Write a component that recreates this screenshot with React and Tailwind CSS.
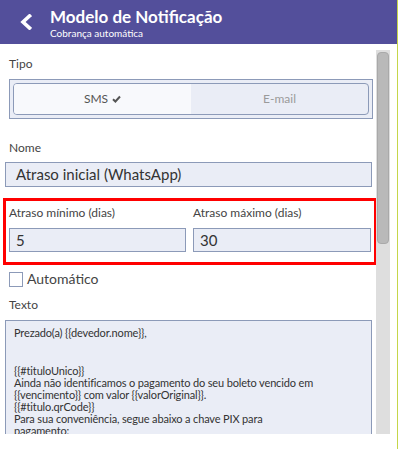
import React from "react";

const font = { fontFamily: "Lato, 'Open Sans', sans-serif" };

export default function App() {
  return (
    <div className="flex h-[449px] w-[398px] overflow-hidden bg-white" style={font}>
      <div className="flex h-[449px] w-[397px] flex-col">
        <header className="flex h-[44px] shrink-0 items-center bg-[#534f9b] text-white">
          <div className="flex w-[50px] justify-center pl-[1px]">
            <svg width="12" height="16" viewBox="0 0 12 16" fill="none">
              <polyline points="9.5,2 3,8 9.5,14" stroke="white" strokeWidth="3.6" strokeLinecap="square" />
            </svg>
          </div>
          <div className="flex flex-col">
            <span className="text-[17px] font-bold leading-[21px]">Modelo de Notificação</span>
            <span className="text-[10px] leading-[12px]">Cobrança automática</span>
          </div>
        </header>

        <div className="flex h-[390px] max-h-[390px] shrink-0 overflow-hidden">
          <div className="h-[390px] w-[376px] shrink-0 overflow-hidden text-[#333]">
            <div className="ml-[9px] mt-[13px] text-[12px] leading-[14px] text-[#444]">Tipo</div>
            <div className="ml-[9px] mt-[8px] h-[40px] w-[364px] border border-[#8c9ab8] bg-[#eaedf6] p-[3px]">
              <div className="flex h-full overflow-hidden rounded-[4px] border border-[#8c9ab8]">
                <div className="flex flex-1 items-center justify-center gap-[4px] bg-[#f8f9fc] text-[12px] text-[#555]">
                  SMS
                  <svg width="9" height="8" viewBox="0 0 9 8">
                    <polyline points="1,4.2 3.4,6.5 8,1.5" fill="none" stroke="#555" strokeWidth="2" />
                  </svg>
                </div>
                <div className="flex flex-1 items-center justify-center text-[12px] text-[#9a9a9a]">E-mail</div>
              </div>
            </div>

            <div className="ml-[9px] mt-[22px] text-[12px] leading-[14px] text-[#444]">Nome</div>
            <div className="ml-[5px] mt-[7px] flex h-[25px] w-[367px] items-center border border-[#8c9ab8] bg-[#eaedf6] px-[10px] text-[15px] text-[#333]">
              Atraso inicial (WhatsApp)
            </div>

            <div className="ml-[3px] mt-[11px] h-[67px] w-[374px] border-[3px] border-[#f00] px-[3px] pt-[5px]">
              <div className="flex gap-[7px]">
                <div className="flex w-[178px] flex-col">
                  <span className="text-[12px] leading-[14px] text-[#444]">Atraso mínimo (dias)</span>
                  <div className="mt-[8px] flex h-[24px] items-center border border-[#8c9ab8] bg-[#eaedf6] px-[6px] text-[15px]">5</div>
                </div>
                <div className="flex w-[179px] flex-col">
                  <span className="text-[12px] leading-[14px] text-[#444]">Atraso máximo (dias)</span>
                  <div className="mt-[8px] flex h-[24px] items-center border border-[#8c9ab8] bg-[#eaedf6] px-[6px] text-[15px]">30</div>
                </div>
              </div>
            </div>

            <div className="ml-[9px] mt-[6px] flex items-center gap-[4px]">
              <div className="h-[15px] w-[14px] border border-[#8c9ab8] bg-white" />
              <span className="text-[14px] leading-[16px] text-[#444]">Automático</span>
            </div>

            <div className="ml-[9px] mt-[11px] text-[12px] leading-[14px] text-[#444]">Texto</div>
            <div className="ml-[5px] mt-[8px] h-[130px] w-[367px] overflow-hidden border border-[#8c9ab8] bg-[#eaedf6] px-[8px] pt-[6px] text-[11px] leading-[12px] tracking-[-0.15px] text-[#333]">
              <div>Prezado(a) {"{{devedor.nome}}"},</div>
              <div className="h-[26px]" />
              <div>{"{{#tituloUnico}}"}</div>
              <div>Ainda não identificamos o pagamento do seu boleto vencido em</div>
              <div>{"{{vencimento}}"} com valor {"{{valorOriginal}}"}.</div>
              <div>{"{{#titulo.qrCode}}"}</div>
              <div>Para sua conveniência, segue abaixo a chave PIX para</div>
              <div>pagamento:</div>
              <div>{"{{split}}"}</div>
            </div>
          </div>

          <div className="mt-[6px] h-[384px] w-[14px] shrink-0 bg-[#dedede] px-[1px] pt-[2px]">
            <div className="h-[192px] rounded-[4px] border border-[#a9a9a9] bg-[#b9b9b9]" />
          </div>
        </div>
        <div className="h-[15px] shrink-0 bg-white" />
      </div>
      <div className="h-[449px] w-[1px] bg-[#c5d64a]" />
    </div>
  );
}
